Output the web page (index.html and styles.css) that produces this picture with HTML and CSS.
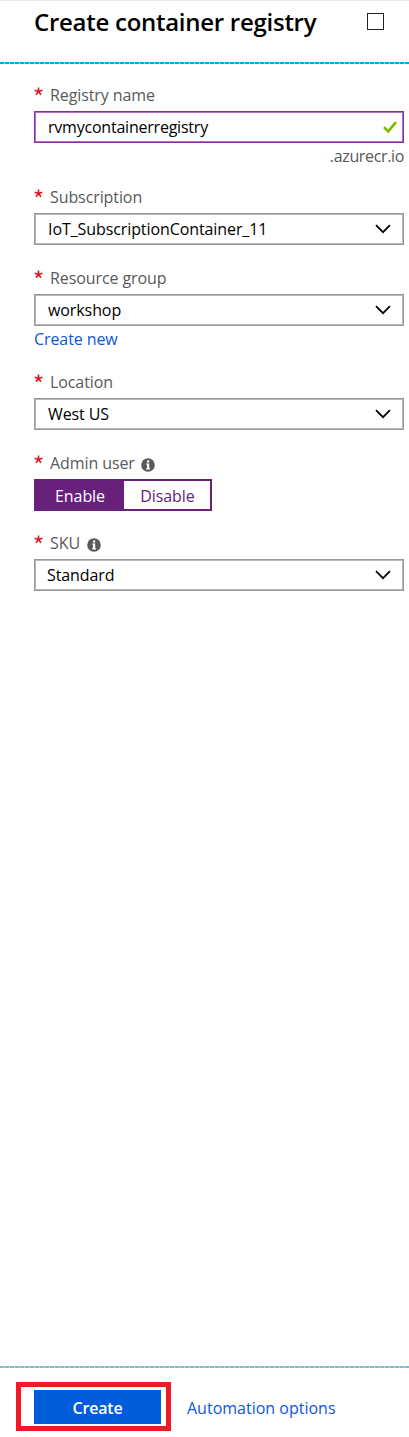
FILE: index.html
```html
<!DOCTYPE html>
<html lang="en">
<head>
<meta charset="utf-8">
<title>Create container registry</title>
<link rel="stylesheet" href="styles.css">
</head>
<body>
<svg class="defs" aria-hidden="true">
  <symbol id="chevron" viewBox="0 0 16 10"><path d="M1 1.2 8 8.2 15 1.2" fill="none" stroke="#000" stroke-width="1.7"/></symbol>
  <symbol id="info" viewBox="0 0 14 14"><circle cx="7" cy="7" r="6.8" fill="#5a5a5a"/><path d="M6 2.6h2.2v1.8H6zM5.2 5.6h3v4.6h.9v1.2H5.1v-1.2H6V6.8h-.8z" fill="#fff"/></symbol>
  <symbol id="star" viewBox="0 0 10 10"><path d="M5 5V.6M5 5 .7 3.7M5 5 9.3 3.7M5 5 2.3 8.7M5 5 7.7 8.7" fill="none" stroke="#e81123" stroke-width="1.8"/></symbol>
</svg>
<main class="blade">
  <header class="header">
    <h1 class="title">Create container registry</h1>
    <span class="maximize"></span>
  </header>
  <form class="form">
    <section class="field">
      <div class="label"><svg class="star"><use href="#star"/></svg><span>Registry name</span></div>
      <div class="box box-active"><span>rvmycontainerregistry</span><svg class="check" viewBox="0 0 14 12"><path d="M1 6.2 5.2 10.4 13 1.2" fill="none" stroke="#7fba00" stroke-width="2.6"/></svg></div>
      <div class="suffix">.azurecr.io</div>
    </section>
    <section class="field field-subscription">
      <div class="label"><svg class="star"><use href="#star"/></svg><span>Subscription</span></div>
      <div class="box"><span>IoT_SubscriptionContainer_11</span><svg class="chevron"><use href="#chevron"/></svg></div>
    </section>
    <section class="field field-group">
      <div class="label"><svg class="star"><use href="#star"/></svg><span>Resource group</span></div>
      <div class="box"><span>workshop</span><svg class="chevron"><use href="#chevron"/></svg></div>
      <a class="new-link">Create new</a>
    </section>
    <section class="field field-location">
      <div class="label"><svg class="star"><use href="#star"/></svg><span>Location</span></div>
      <div class="box"><span>West US</span><svg class="chevron"><use href="#chevron"/></svg></div>
    </section>
    <section class="field field-admin">
      <div class="label"><svg class="star"><use href="#star"/></svg><span>Admin user</span><svg class="info"><use href="#info"/></svg></div>
      <div class="toggle"><span class="option option-on">Enable</span><span class="option">Disable</span></div>
    </section>
    <section class="field field-sku">
      <div class="label"><svg class="star"><use href="#star"/></svg><span>SKU</span><svg class="info"><use href="#info"/></svg></div>
      <div class="box box-sku"><span>Standard</span><svg class="chevron"><use href="#chevron"/></svg></div>
    </section>
  </form>
  <footer class="footer">
    <div class="highlight"><button class="create" type="button">Create</button></div>
    <a class="automation">Automation options</a>
  </footer>
</main>
</body>
</html>
```
FILE: styles.css
```css
* { box-sizing: border-box; }
body { margin: 0; background: #fff; font: 16px/22px "Open Sans", "Noto Sans", sans-serif; letter-spacing: -0.09px; color: #000; }
.defs { display: none; }
.blade { display: flex; flex-direction: column; height: 1437px; border-top: 1px solid #ebebeb; white-space: nowrap; }
.header { display: flex; justify-content: space-between; height: 63px; padding: 4px 25px 0 34px; background: repeating-linear-gradient(90deg, #00abec 0 4px, #8edcf8 4px 5px) left bottom / 100% 2px no-repeat; }
.title { margin: 0; font-size: 24px; line-height: 34px; font-weight: 600; letter-spacing: -0.27px; }
.maximize { width: 17px; height: 17px; margin-top: 8px; border: 1px solid #222; }
.form { flex: 1; padding: 15px 5px 0 34px; }
.field-subscription { margin-top: 12px; }
.field-group, .field-admin { margin-top: 17px; }
.field-location { margin-top: 14px; }
.field-sku { margin-top: 16px; }
.label { display: flex; align-items: center; height: 32px; color: #595959; }
.star { width: 9px; height: 9px; margin: 0 7px 7px 0; }
.info { width: 14px; height: 14px; margin: 3px 0 0 7px; }
.field-admin .info { margin-left: 6px; }
.box { display: flex; align-items: center; justify-content: space-between; height: 32px; padding: 0 12px 0 13px; border: 1px solid #979797; box-shadow: inset 0 0 0 1px #b8b8b8; }
.box-active { height: 32px; padding-right: 6px; border-color: #8a2da5; box-shadow: inset 0 0 0 1px #b06fc1; letter-spacing: -0.22px; }
.box-sku { padding-left: 12px; }
.chevron { width: 16px; height: 10px; }
.check { width: 14px; height: 12px; }
.suffix { display: flex; justify-content: flex-end; align-items: center; height: 26px; color: #595959; letter-spacing: -0.35px; }
.new-link { display: flex; align-items: center; height: 26px; color: #0f56d9; }
.toggle { display: flex; width: 178px; height: 32px; border: 2px solid #68217a; }
.option { flex: 1; display: flex; align-items: center; justify-content: center; padding: 1px 0 0 1px; color: #68217a; }
.option-on { flex: 0 0 88px; padding-left: 0; background: #68217a; color: #fff; }
.footer { display: flex; height: 71px; padding: 16px 0 0 16px; background: repeating-linear-gradient(90deg, #7dbccb 0 4px, #c9d2d5 4px 5px) left top / 100% 2px no-repeat; }
.highlight { width: 155px; height: 49px; padding: 3px 5px 0 13px; border: 5px solid #ed1c24; }
.create { display: flex; align-items: center; justify-content: center; width: 127px; height: 34px; padding: 1px 0 0; border: 0; background: #015cda; color: #fff; font: 600 16px/22px "Open Sans", "Noto Sans", sans-serif; letter-spacing: -0.2px; }
.automation { display: flex; align-items: center; height: 52px; margin-left: 16px; color: #0f56d9; letter-spacing: 0; }
```
